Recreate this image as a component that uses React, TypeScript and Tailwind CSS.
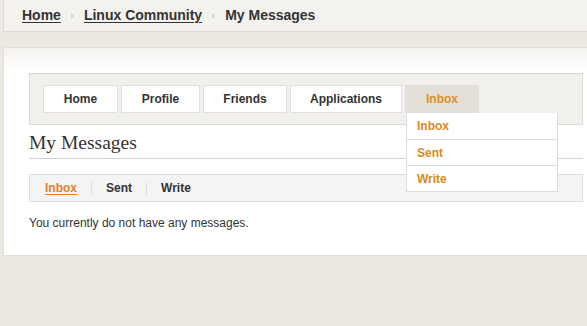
import React from 'react';

const navTabs = [
  { label: 'Home', width: 'w-[75px]' },
  { label: 'Profile', width: 'w-[79px]' },
  { label: 'Friends', width: 'w-[84px]' },
  { label: 'Applications', width: 'w-[112px]' },
];

const inboxMenu = ['Inbox', 'Sent', 'Write'];

function Crumb({ children, link }: { children: React.ReactNode; link?: boolean }) {
  return (
    <span className={link ? 'underline underline-offset-2 text-[#333]' : 'text-[#333]'}>{children}</span>
  );
}

function Arrow() {
  return (
    <span className="mx-[10px] inline-block w-0 h-0 border-y-[3px] border-y-transparent border-l-[3px] border-l-[#d6d2cc]" />
  );
}

export default function App() {
  return (
    <div
      className="w-full h-[326px] bg-[#ece8e2] pl-[3px] overflow-hidden"
      style={{ fontFamily: '"Liberation Sans", Arial, sans-serif' }}
    >
      {/* breadcrumb bar */}
      <div className="h-[32px] bg-[#f4f2ef] border-l border-b border-[#dedad4] pl-[18px] flex items-center text-[14px] font-bold">
        <Crumb link>Home</Crumb>
        <Arrow />
        <Crumb link>Linux Community</Crumb>
        <Arrow />
        <Crumb>My Messages</Crumb>
      </div>

      {/* main panel */}
      <div className="mt-[15px] h-[209px] border-l border-b border-t border-[#e2ded8] bg-gradient-to-b from-[#f4f2ef] to-white to-[22px] pl-[25px] pr-[4px] pt-[25px]">
        <div className="h-[52px] bg-[#f2f0ec] border border-[#dcd9d3] pl-[13px] pt-[11px] flex gap-[3px]">
          {navTabs.map((t) => (
            <div
              key={t.label}
              className={`${t.width} h-[28px] bg-white border border-[#e2dfda] flex items-center justify-center text-[12px] font-bold text-[#333]`}
            >
              {t.label}
            </div>
          ))}
          <div className="relative w-[74px] h-[28px] bg-[#e3dfd8] flex items-center justify-center text-[12px] font-bold text-[#de8f22]">
            Inbox
            <div className="absolute left-[1px] top-full w-[152px] bg-white border border-[#dcdcdc] border-t-0 z-10">
              {inboxMenu.map((m, i) => (
                <div
                  key={m}
                  className={`h-[26px] pl-[10px] flex items-center text-[12px] font-bold text-[#d98a1c] ${
                    i > 0 ? 'border-t border-[#dcdcdc]' : ''
                  }`}
                >
                  {m}
                </div>
              ))}
            </div>
          </div>
        </div>

        <h2
          className="pt-[6px] pb-[3px] leading-[24px] text-[19.5px] text-[#333] border-b border-[#d2d2d2]"
          style={{ fontFamily: '"Liberation Serif", Georgia, serif' }}
        >
          My Messages
        </h2>

        <div className="mt-[15px] h-[28px] bg-[#f4f4f4] border border-[#dcdcdc] pl-[15px] flex items-center text-[12px] font-bold">
          <span className="text-[#e67f2a] underline underline-offset-2">Inbox</span>
          <span className="mx-[14px] w-px h-[13px] bg-[#dedede]" />
          <span className="text-[#333]">Sent</span>
          <span className="mx-[14px] w-px h-[13px] bg-[#dedede]" />
          <span className="text-[#333]">Write</span>
        </div>

        <p className="mt-[13px] text-[12px] leading-[16px] text-[#333]">You currently do not have any messages.</p>
      </div>
    </div>
  );
}
